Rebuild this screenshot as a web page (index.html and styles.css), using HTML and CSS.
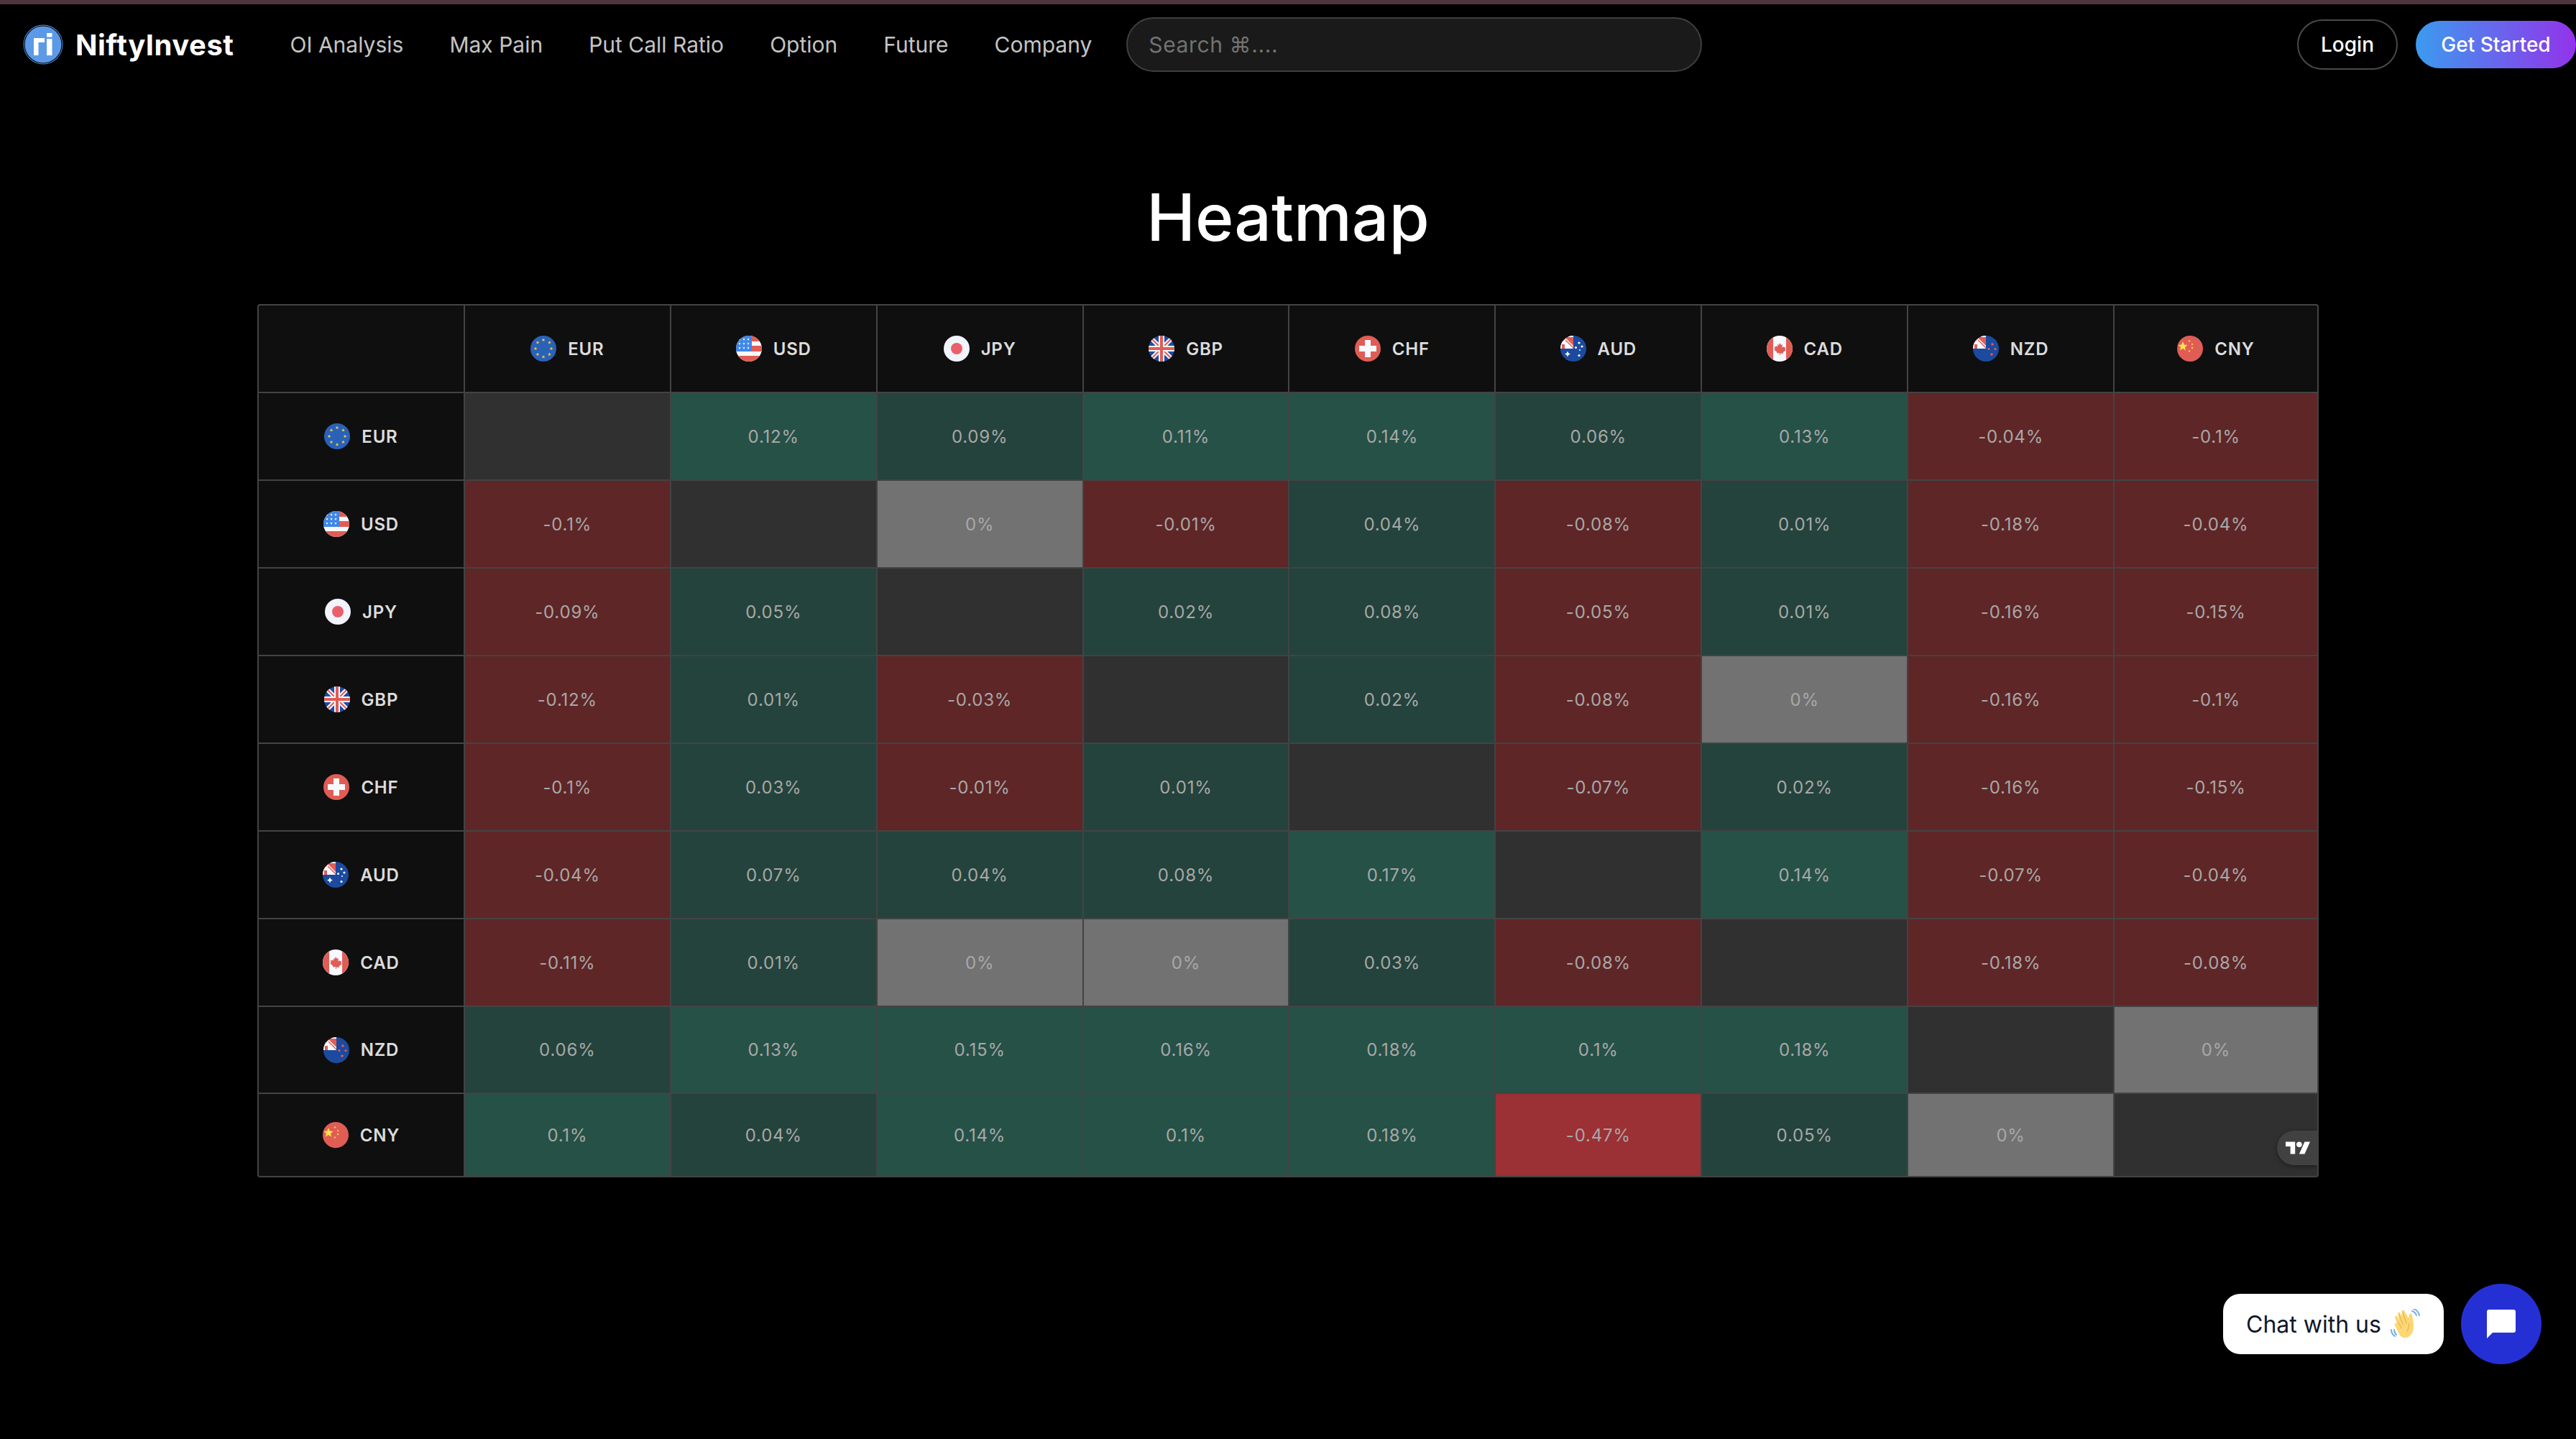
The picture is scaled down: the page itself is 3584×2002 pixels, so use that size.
FILE: index.html
```html
<!DOCTYPE html>
<html lang="en">
<head>
<meta charset="utf-8">
<title>Heatmap</title>
<link rel="stylesheet" href="styles.css">
</head>
<body>
<svg class="defs" width="0" height="0" aria-hidden="true">
  <defs>
    <path id="star" d="M0-2.6.7-.8 2.5-.8 1.1.3 1.6 2.1 0 1 -1.6 2.1-1.1.3-2.5-.8-.7-.8z"/>
    <path id="wstar" d="M0-1.8.5-.5 1.8-.5.8.3 1.1 1.6 0 .9-1.1 1.6-.8.3-1.8-.5-.5-.5z"/>
    <symbol id="canton" viewBox="0 0 18 18">
      <rect width="18" height="18" fill="#e05d56"/>
      <path fill="#f7f9ff" d="M11 0h7v2h-7zM0 7h6l12 11H0z"/>
      <path fill="#e05d56" d="M2 12h4v6H2z"/>
      <path stroke="#f7f9ff" stroke-width="4.200" d="M6 5 18 17"/>
      <path stroke="#e05d56" stroke-width="1.400" d="M7 6 18 17"/>
    </symbol>
    <symbol id="f-eur" viewBox="0 0 36 36">
      <rect width="36" height="36" fill="#2a62b8"/>
      <g fill="#f4cf3c">
        <use href="#star" x="18" y="6"/><use href="#star" x="26.5" y="9.5"/><use href="#star" x="29" y="18"/><use href="#star" x="26.5" y="26"/>
        <use href="#star" x="18" y="29.5"/><use href="#star" x="10" y="26"/><use href="#star" x="7" y="18"/><use href="#star" x="10" y="9.5"/>
      </g>
    </symbol>
    <symbol id="f-usd" viewBox="0 0 36 36">
      <rect width="36" height="36" fill="#f7f9ff"/>
      <path fill="#e05d56" d="M0 0h36v8H0zM0 14h36v8H0zM0 28h36v8H0z"/>
      <rect width="22" height="22" fill="#3f87e8"/>
      <g fill="#fff">
        <use href="#wstar" x="5" y="5"/><use href="#wstar" x="11" y="5"/><use href="#wstar" x="17" y="5"/>
        <use href="#wstar" x="5" y="11"/><use href="#wstar" x="11" y="11"/><use href="#wstar" x="17" y="11"/>
        <use href="#wstar" x="5" y="17"/><use href="#wstar" x="11" y="17"/><use href="#wstar" x="17" y="17"/>
      </g>
    </symbol>
    <symbol id="f-jpy" viewBox="0 0 36 36">
      <rect width="36" height="36" fill="#f1f4fb"/>
      <circle cx="18" cy="18" r="8" fill="#ea5f6b"/>
    </symbol>
    <symbol id="f-gbp" viewBox="0 0 36 36">
      <rect width="36" height="36" fill="#1e4da1"/>
      <path stroke="#f7f9ff" stroke-width="6" d="M0 0 36 36M36 0 0 36"/>
      <path stroke="#e05d56" stroke-width="2" d="M0 0 36 36M36 0 0 36"/>
      <path fill="#f7f9ff" d="M14 0h8v14h14v8H22v14h-8V22H0v-8h14z"/>
      <path fill="#e05d56" d="M16 0h4v16h16v4H20v16h-4V20H0v-4h16z"/>
    </symbol>
    <symbol id="f-chf" viewBox="0 0 36 36">
      <rect width="36" height="36" fill="#e05d56"/>
      <path fill="#f7f9ff" d="M14 6h8v8h8v8h-8v8h-8v-8H6v-8h8z"/>
    </symbol>
    <symbol id="f-aud" viewBox="0 0 36 36">
      <rect width="36" height="36" fill="#1c4a9f"/>
      <use href="#canton" width="18" height="18"/>
      <g fill="#fff">
        <path d="M10 21.5 11.3 24.2 14 25.5 11.3 26.8 10 29.5 8.7 26.8 6 25.5 8.7 24.2z"/>
        <circle cx="26" cy="10" r="1.600"/><circle cx="30" cy="15" r="1.600"/><circle cx="21.500" cy="16.500" r="1.500"/><circle cx="27" cy="20" r="1"/><circle cx="26" cy="27.500" r="1.600"/>
      </g>
    </symbol>
    <symbol id="f-cad" viewBox="0 0 36 36">
      <rect width="36" height="36" fill="#f7f9ff"/>
      <path fill="#e05d56" d="M0 0h9v36H0zM27 0h9v36h-9z"/>
      <path fill="#e05d56" d="M18 10l2 3 2-1-.7 4.500 2-1.500.6 1.500 2.600-.5-1 3 1.500.8-4.500 3.700.5 1.500-4-.5V27h-1v-3l-4 .5.500-1.500-4.500-3.700L11.500 18l-1-3 2.600.5.600-1.500 2 1.500L15 12l2 1z"/>
    </symbol>
    <symbol id="f-nzd" viewBox="0 0 36 36">
      <rect width="36" height="36" fill="#1c4a9f"/>
      <use href="#canton" width="18" height="18"/>
      <g fill="#e05d56">
        <circle cx="27" cy="12" r="1.800"/><circle cx="22" cy="18.500" r="1.600"/><circle cx="31" cy="18.500" r="1.600"/><circle cx="26" cy="26" r="1.800"/>
      </g>
    </symbol>
    <symbol id="f-cny" viewBox="0 0 36 36">
      <rect width="36" height="36" fill="#e05d56"/>
      <path fill="#f9e24b" d="M8 8 9.900 12.600 14.500 12.900 11 16 12.100 20.600 8 18.100 3.900 20.600 5 16 1.500 12.900 6.100 12.600z"/>
      <g fill="#f4cf3c">
        <circle cx="17" cy="7.500" r="1.200"/><circle cx="21" cy="12" r="1.200"/><circle cx="21" cy="17" r="1.200"/><circle cx="17" cy="21.500" r="1.200"/>
      </g>
    </symbol>
  </defs>
</svg>

<div class="topline"></div>
<header class="navbar">
  <a class="brand" href="#">
    <svg class="brand-logo" viewBox="0 0 56 56" aria-hidden="true">
      <circle cx="28" cy="28" r="27.500" fill="#5c9ae8"/>
      <circle cx="28" cy="28" r="26" fill="none" stroke="#000" stroke-width="1.200"/>
      <path fill="#fff" d="M15 19h15v6H21.500v18H15z"/>
      <path fill="#fff" d="M33 20h7.500v23H33zM33 12h7.500v5.500H33z"/>
    </svg>
    <span class="brand-name">NiftyInvest</span>
  </a>
  <nav class="nav-links">
    <a href="#">OI Analysis</a>
    <a href="#">Max Pain</a>
    <a href="#">Put Call Ratio</a>
    <a href="#">Option</a>
    <a href="#">Future</a>
    <a href="#">Company</a>
  </nav>
  <div class="search">Search ⌘....</div>
  <div class="actions">
    <a class="btn-login" href="#">Login</a>
    <a class="btn-start" href="#">Get Started</a>
  </div>
</header>

<main class="content">
  <h1 class="title">Heatmap</h1>
  <section class="heatmap">
    <div class="cell head"></div>
    <div class="cell head"><svg class="flag"><use href="#f-eur"/></svg><span>EUR</span></div>
    <div class="cell head"><svg class="flag"><use href="#f-usd"/></svg><span>USD</span></div>
    <div class="cell head"><svg class="flag"><use href="#f-jpy"/></svg><span>JPY</span></div>
    <div class="cell head"><svg class="flag"><use href="#f-gbp"/></svg><span>GBP</span></div>
    <div class="cell head"><svg class="flag"><use href="#f-chf"/></svg><span>CHF</span></div>
    <div class="cell head"><svg class="flag"><use href="#f-aud"/></svg><span>AUD</span></div>
    <div class="cell head"><svg class="flag"><use href="#f-cad"/></svg><span>CAD</span></div>
    <div class="cell head"><svg class="flag"><use href="#f-nzd"/></svg><span>NZD</span></div>
    <div class="cell head"><svg class="flag"><use href="#f-cny"/></svg><span>CNY</span></div>

    <div class="cell head"><svg class="flag"><use href="#f-eur"/></svg><span>EUR</span></div>
    <div class="cell none"></div>
    <div class="cell up2">0.12%</div>
    <div class="cell up1">0.09%</div>
    <div class="cell up2">0.11%</div>
    <div class="cell up2">0.14%</div>
    <div class="cell up1">0.06%</div>
    <div class="cell up2">0.13%</div>
    <div class="cell down">-0.04%</div>
    <div class="cell down">-0.1%</div>

    <div class="cell head"><svg class="flag"><use href="#f-usd"/></svg><span>USD</span></div>
    <div class="cell down">-0.1%</div>
    <div class="cell none"></div>
    <div class="cell zero">0%</div>
    <div class="cell down">-0.01%</div>
    <div class="cell up1">0.04%</div>
    <div class="cell down">-0.08%</div>
    <div class="cell up1">0.01%</div>
    <div class="cell down">-0.18%</div>
    <div class="cell down">-0.04%</div>

    <div class="cell head"><svg class="flag"><use href="#f-jpy"/></svg><span>JPY</span></div>
    <div class="cell down">-0.09%</div>
    <div class="cell up1">0.05%</div>
    <div class="cell none"></div>
    <div class="cell up1">0.02%</div>
    <div class="cell up1">0.08%</div>
    <div class="cell down">-0.05%</div>
    <div class="cell up1">0.01%</div>
    <div class="cell down">-0.16%</div>
    <div class="cell down">-0.15%</div>

    <div class="cell head"><svg class="flag"><use href="#f-gbp"/></svg><span>GBP</span></div>
    <div class="cell down">-0.12%</div>
    <div class="cell up1">0.01%</div>
    <div class="cell down">-0.03%</div>
    <div class="cell none"></div>
    <div class="cell up1">0.02%</div>
    <div class="cell down">-0.08%</div>
    <div class="cell zero">0%</div>
    <div class="cell down">-0.16%</div>
    <div class="cell down">-0.1%</div>

    <div class="cell head"><svg class="flag"><use href="#f-chf"/></svg><span>CHF</span></div>
    <div class="cell down">-0.1%</div>
    <div class="cell up1">0.03%</div>
    <div class="cell down">-0.01%</div>
    <div class="cell up1">0.01%</div>
    <div class="cell none"></div>
    <div class="cell down">-0.07%</div>
    <div class="cell up1">0.02%</div>
    <div class="cell down">-0.16%</div>
    <div class="cell down">-0.15%</div>

    <div class="cell head"><svg class="flag"><use href="#f-aud"/></svg><span>AUD</span></div>
    <div class="cell down">-0.04%</div>
    <div class="cell up1">0.07%</div>
    <div class="cell up1">0.04%</div>
    <div class="cell up1">0.08%</div>
    <div class="cell up2">0.17%</div>
    <div class="cell none"></div>
    <div class="cell up2">0.14%</div>
    <div class="cell down">-0.07%</div>
    <div class="cell down">-0.04%</div>

    <div class="cell head"><svg class="flag"><use href="#f-cad"/></svg><span>CAD</span></div>
    <div class="cell down">-0.11%</div>
    <div class="cell up1">0.01%</div>
    <div class="cell zero">0%</div>
    <div class="cell zero">0%</div>
    <div class="cell up1">0.03%</div>
    <div class="cell down">-0.08%</div>
    <div class="cell none"></div>
    <div class="cell down">-0.18%</div>
    <div class="cell down">-0.08%</div>

    <div class="cell head"><svg class="flag"><use href="#f-nzd"/></svg><span>NZD</span></div>
    <div class="cell up1">0.06%</div>
    <div class="cell up2">0.13%</div>
    <div class="cell up2">0.15%</div>
    <div class="cell up2">0.16%</div>
    <div class="cell up2">0.18%</div>
    <div class="cell up2">0.1%</div>
    <div class="cell up2">0.18%</div>
    <div class="cell none"></div>
    <div class="cell zero">0%</div>

    <div class="cell head"><svg class="flag"><use href="#f-cny"/></svg><span>CNY</span></div>
    <div class="cell up2">0.1%</div>
    <div class="cell up1">0.04%</div>
    <div class="cell up2">0.14%</div>
    <div class="cell up2">0.1%</div>
    <div class="cell up2">0.18%</div>
    <div class="cell down-strong">-0.47%</div>
    <div class="cell up1">0.05%</div>
    <div class="cell zero">0%</div>
    <div class="cell none"></div>

    <a class="tv-badge" href="#" aria-label="TradingView">
      <svg class="tv-logo" viewBox="0 0 36 18" aria-hidden="true">
        <path fill="#fff" d="M14 18H7V7H0V0h14zM28 18h-8L28 0h8z"/>
        <circle fill="#fff" cx="20" cy="4" r="4"/>
      </svg>
    </a>
  </section>
</main>

<aside class="chat">
  <div class="chat-label">
    <span>Chat with us</span>
    <svg class="wave" viewBox="0 0 42 42" aria-hidden="true">
      <path fill="none" stroke="#6fb1e8" stroke-width="2" stroke-linecap="round" d="M31 3c3 1 5 3 6 6M33 0c4 1 7 5 8 9M2 29c0 4 2 7 5 9M6 29c0 3 1 5 3 7"/>
      <path fill="#fcd773" d="M17 2c2-1 3 0 4 2l5 9 1-5c1-2 3-2 4 0l2 12c1 8-1 15-7 19-6 3-12 0-14-6L7 23c-1-2 1-4 3-3l-3-8c0-2 2-3 3-2l3 5-2-8c0-2 2-3 3-2l2 5z"/>
      <path fill="none" stroke="#e6a94c" stroke-width="1" stroke-linecap="round" d="M13 8l5 14M18 5l5 15M27 20c-1 4-1 8-3 11M11 17l5 10"/>
    </svg>
  </div>
  <button class="chat-btn" aria-label="Open chat">
    <svg class="chat-icon" viewBox="0 0 40 40" aria-hidden="true">
      <path fill="#fff" d="M3 0h34a3 3 0 0 1 3 3v26a3 3 0 0 1-3 3H8L0 40V3a3 3 0 0 1 3-3z"/>
    </svg>
  </button>
</aside>
</body>
</html>
```

FILE: styles.css
```css
* { box-sizing: border-box; }

html, body {
  margin: 0;
  height: 100%;
  background: #000;
}

body {
  font-family: Inter, "Liberation Sans", sans-serif;
  overflow: hidden;
}

a { text-decoration: none; color: inherit; }

.defs { position: absolute; }

.topline {
  height: 6px;
  background: #4f363d;
}

.navbar {
  display: flex;
  align-items: center;
  height: 112px;
  padding-left: 32px;
}

.brand {
  display: flex;
  align-items: center;
  gap: 17px;
  margin-right: 78px;
}

.brand-logo {
  width: 56px;
  height: 56px;
}

.brand-name {
  font-size: 40px;
  font-weight: 700;
  letter-spacing: 0.5px;
  color: #fff;
}

.nav-links {
  display: flex;
  gap: 64px;
  font-size: 30px;
  color: #c4c4c4;
}

.search {
  display: flex;
  align-items: center;
  width: 801px;
  height: 76px;
  margin-left: 48px;
  padding-left: 29px;
  border: 2px solid #3f3f3f;
  border-radius: 38px;
  background: #1a1a1a;
  font-size: 30px;
  letter-spacing: 0.6px;
  color: #727272;
}

.actions {
  display: flex;
  align-items: center;
  gap: 25px;
  margin-left: auto;
}

.btn-login {
  display: flex;
  align-items: center;
  justify-content: center;
  width: 140px;
  height: 70px;
  border: 2px solid #4a4a4a;
  border-radius: 35px;
  font-size: 28px;
  font-weight: 500;
  color: #fff;
}

.btn-start {
  display: flex;
  align-items: center;
  justify-content: center;
  width: 223px;
  height: 66px;
  border-radius: 33px;
  background: linear-gradient(90deg, #3b9bef, #9333ea);
  font-size: 28px;
  font-weight: 500;
  color: #fff;
}

.content {
  display: flex;
  flex-direction: column;
  align-items: center;
}

.title {
  margin: 126px 0 63px;
  font-size: 91px;
  line-height: 116px;
  font-weight: 500;
  color: #fff;
}

.heatmap {
  position: relative;
  display: grid;
  grid-template-columns: repeat(9, 284.9px) 1fr;
  grid-template-rows: repeat(8, 120px) 119px 114px;
  gap: 2px;
  width: 2868px;
  border: 2px solid #434343;
  border-radius: 4px;
  background: #434343;
  overflow: hidden;
}

.cell {
  display: flex;
  align-items: center;
  justify-content: center;
  gap: 16px;
  font-size: 24px;
  letter-spacing: 0.8px;
  color: #a8a8a8;
}

.head {
  background: #0f0f0f;
  font-weight: 600;
  color: #dcdcdc;
}

.none { background: #303030; }
.up1 { background: #24433c; }
.up2 { background: #265147; }
.down { background: #5f2627; }
.down-strong { background: #9b3035; }
.zero { background: #727272; }

.flag {
  flex: none;
  width: 36px;
  height: 36px;
  border-radius: 50%;
}

.tv-badge {
  position: absolute;
  right: 0;
  bottom: 15px;
  display: flex;
  align-items: center;
  justify-content: flex-end;
  width: 56px;
  height: 48px;
  padding-right: 10px;
  border-radius: 24px 0 0 24px;
  background: #414141;
  box-shadow: 0 2px 6px rgba(0, 0, 0, 0.4);
}

.tv-logo {
  width: 34px;
  height: 18px;
}

.chat {
  position: fixed;
  right: 48px;
  top: 1786px;
  display: flex;
  align-items: center;
  gap: 24px;
}

.chat-label {
  display: flex;
  align-items: center;
  gap: 12px;
  width: 307px;
  height: 84px;
  padding-left: 32px;
  border-radius: 24px;
  background: #fff;
  font-size: 32px;
  color: #0f172a;
}

.wave {
  width: 42px;
  height: 42px;
}

.chat-btn {
  display: flex;
  align-items: center;
  justify-content: center;
  width: 112px;
  height: 112px;
  padding: 0;
  border: 0;
  border-radius: 50%;
  background: #2530d4;
}

.chat-icon {
  width: 40px;
  height: 40px;
}
```
